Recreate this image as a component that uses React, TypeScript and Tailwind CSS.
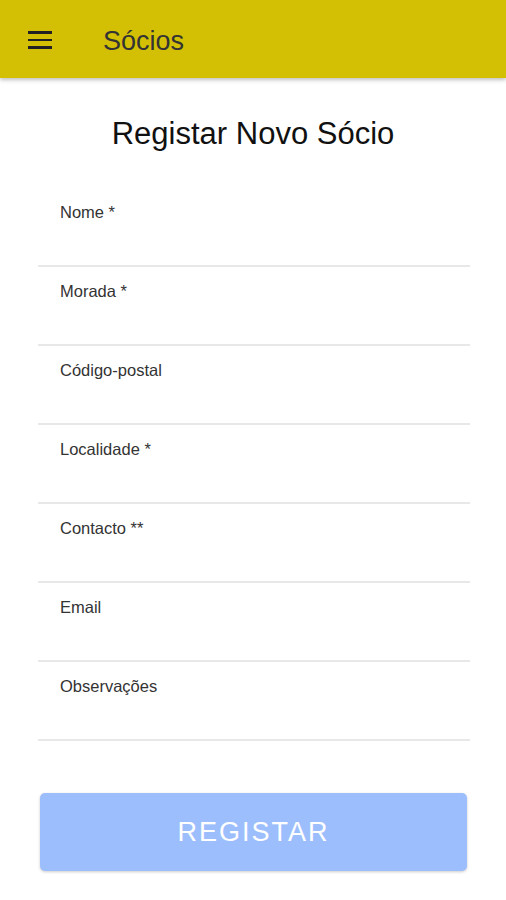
const fields = [
  "Nome *",
  "Morada *",
  "Código-postal",
  "Localidade *",
  "Contacto **",
  "Email",
  "Observações",
];

const App = () => {
  return (
    <div className="min-h-[900px] w-full bg-white font-['Liberation_Sans',Arial,sans-serif]">
      <header className="h-[78px] w-full bg-[#d3c004] flex items-center shadow-[0_2px_4px_rgba(0,0,0,0.25)] relative z-10">
        <div className="ml-[28px] mt-[2px] flex flex-col gap-[5px] w-[24px]">
          <span className="block h-[2.5px] bg-[#222]"></span>
          <span className="block h-[2.5px] bg-[#222]"></span>
          <span className="block h-[2.5px] bg-[#222]"></span>
        </div>
        <h1 className="ml-[51px] mt-[4px] text-[27px] text-[#333]">Sócios</h1>
      </header>

      <main className="px-[38px]">
        <h2 className="mt-[40px] text-center text-[31px] leading-[32px] text-[#111]">
          Registar Novo Sócio
        </h2>

        <div className="mt-[38px] w-[432px]">
          {fields.map((f) => (
            <div key={f} className="h-[79px] border-b-2 border-[#e8e8e8] pt-[15px] pl-[22px]">
              <label className="block text-[16.5px] leading-[18px] text-[#333]">{f}</label>
            </div>
          ))}
        </div>

        <button className="mt-[52px] ml-[2px] h-[78px] w-[427px] rounded-[5px] bg-[#9dbefc] shadow-[0_1px_3px_rgba(0,0,0,0.2)] text-white text-[27px] tracking-[2px]">
          REGISTAR
        </button>
      </main>
    </div>
  );
};

export default App;
